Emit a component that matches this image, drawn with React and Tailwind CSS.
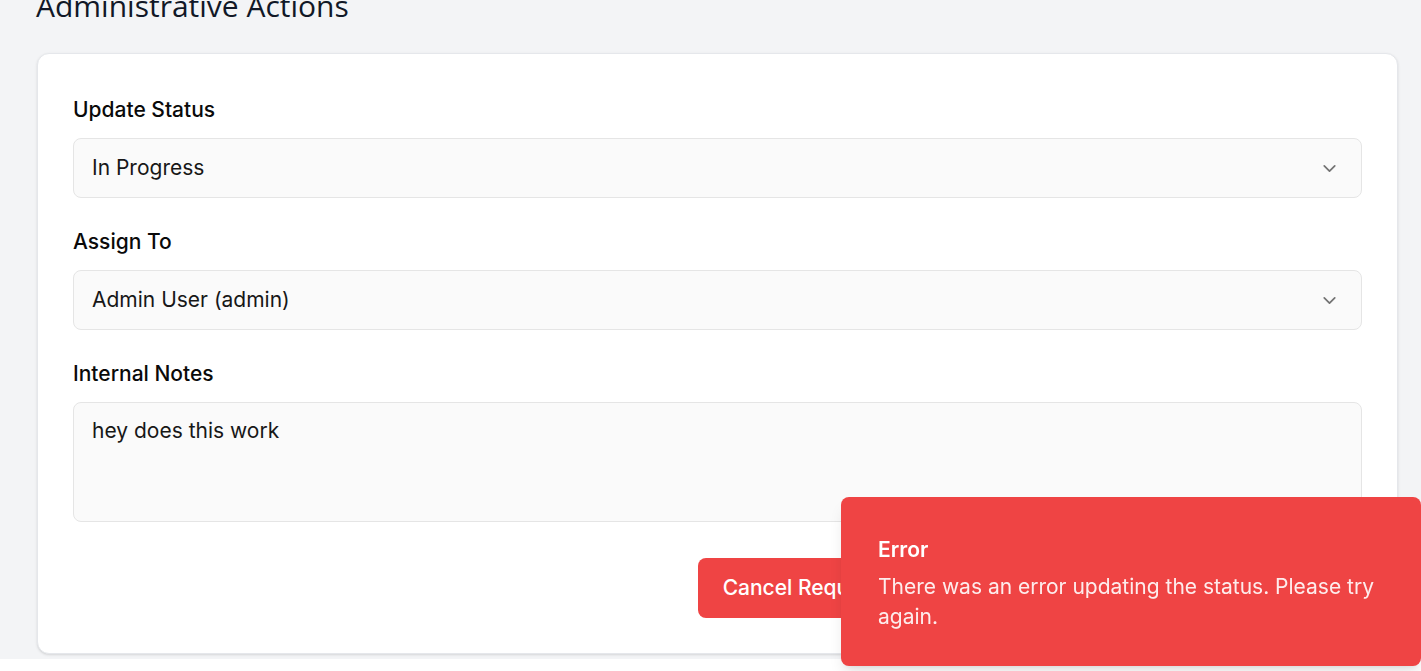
import { ChevronDown } from "lucide-react";

function Field({ label, children }) {
  return (
    <div>
      <div className="mb-[14px] text-[21px] leading-[28px] font-medium text-[#0a0a0a]">{label}</div>
      {children}
    </div>
  );
}

function SelectBox({ value }) {
  return (
    <div className="flex h-[60px] items-center justify-between rounded-[8px] border border-[#e5e5e5] bg-[#fafafa] pl-[18px] pr-[21px]">
      <span className="text-[21px] text-[#171717]">{value}</span>
      <ChevronDown className="h-[21px] w-[21px] text-[#737373]" strokeWidth={2} />
    </div>
  );
}

export default function App() {
  return (
    <div
      className="relative min-h-screen bg-[#f3f4f6] pl-[37px] pr-[23px]"
      style={{ fontFamily: "Inter, 'Noto Sans', sans-serif" }}
    >
      <h2
        className="-mt-[12px] ml-[-1px] text-[30px] leading-[36px] font-medium text-[#111827]"
        style={{ fontFamily: "'Open Sans', sans-serif" }}
      >
        Administrative Actions
      </h2>

      <div className="mt-[29px] rounded-[12px] border border-[#e5e7eb] bg-white px-[35px] pt-[42px] pb-[35px] shadow-sm">
        <div className="flex flex-col gap-[30px]">
          <Field label="Update Status">
            <SelectBox value="In Progress" />
          </Field>
          <Field label="Assign To">
            <SelectBox value="Admin User (admin)" />
          </Field>
          <Field label="Internal Notes">
            <div className="h-[120px] rounded-[8px] border border-[#e5e5e5] bg-[#fafafa] px-[18px] py-[13px] text-[21px] leading-[30px] text-[#171717]">
              hey does this work
            </div>
          </Field>
        </div>

        <div className="mt-[36px] flex justify-end gap-[16px]">
          <button className="h-[60px] whitespace-nowrap rounded-[8px] bg-[#ef4444] px-[25px] text-[21px] font-medium text-white">
            Cancel Request
          </button>
          <button className="h-[60px] w-[441px] whitespace-nowrap rounded-[8px] bg-[#171717] px-[25px] text-[21px] font-medium text-white">
            Save Changes
          </button>
        </div>
      </div>

      <div className="fixed left-[841px] top-[497px] w-[580px] rounded-[8px] bg-[#ef4444] pl-[37px] pr-[32px] pt-[39px] pb-[34px] text-white shadow-lg">
        <div className="text-[21px] leading-[28px] font-semibold">Error</div>
        <div className="mt-[8px] text-[21px] leading-[30px] text-white/90">
          There was an error updating the status. Please try again.
        </div>
      </div>
    </div>
  );
}
